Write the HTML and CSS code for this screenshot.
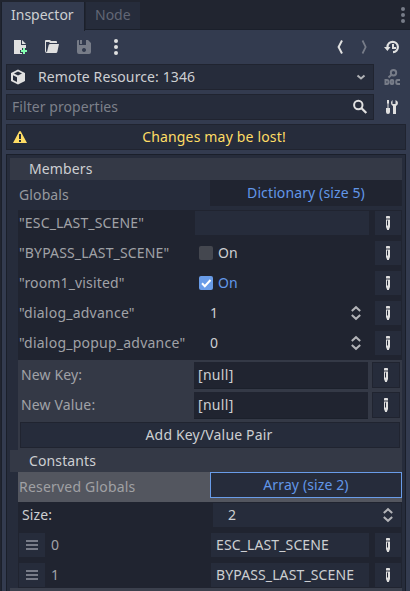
FILE: index.html
```
<!DOCTYPE html>
<html lang="en">
<head>
<meta charset="utf-8">
<title>Inspector</title>
<link rel="stylesheet" href="styles.css">
</head>
<body>
<svg class="defs" width="0" height="0">
  <symbol id="edit" viewBox="0 0 16 16"><path d="M6 1.8Q6 1 6.800 1h2.400q.8 0 .8.8V3.500H6zM6 4.500h4V12l-1.200 3H7.200L6 12zM7 5.500v5h1v-5z" fill-rule="evenodd"/></symbol>
  <symbol id="spin" viewBox="0 0 16 16"><path d="M3.8 6 8 2.2 12.2 6M3.8 10 8 13.8 12.2 10" fill="none" stroke="currentColor" stroke-width="2"/></symbol>
  <symbol id="grip" viewBox="0 0 16 16"><path d="M2 3h12v2H2zm0 4h12v2H2zm0 4h12v2H2z"/></symbol>
  <symbol id="dots" viewBox="0 0 16 16"><circle cx="8" cy="2" r="2"/><circle cx="8" cy="8" r="2"/><circle cx="8" cy="14" r="2"/></symbol>
</svg>
<div class="window">
  <header class="tabs">
    <div class="tab active">Inspector</div>
    <div class="tab">Node</div>
    <svg class="icon dim tabmenu" viewBox="0 0 16 16"><use href="#dots"/></svg>
  </header>
  <main class="dock">
    <div class="toolbar">
      <svg class="icon" viewBox="0 0 16 16"><path d="M2 1h7v5h5v3h-4v2H8v3h2v1H2zM10 1l4 4h-4z"/><path d="M11 9h2v2h2v2h-2v2h-2v-2H9v-2h2z" fill="#84ffb1"/></svg>
      <svg class="icon" viewBox="0 0 16 16"><path d="M2 1Q1 1 1 2v10q0 2 2 2h9q1 0 1.300-1L15 5H6.500Q5 5 4.700 6L3 13q-1 0-1-1V3h3l1 1h7V3q0-1-1-1H7L6 1z"/></svg>
      <svg class="icon dim" viewBox="0 0 16 16"><path d="M2 1h1v5h7V1h2l3 3v9q0 2-2 2H3q-2 0-2-2V2q0-1 1-1zm2 0h2v4H4zm4 8a2 2 0 1 0 .01 0z" fill-rule="evenodd"/></svg>
      <svg class="icon" viewBox="0 0 16 16"><use href="#dots"/></svg>
      <svg class="icon back" viewBox="0 0 16 16"><path d="M10 1.500 6.600 8l3.400 6.500" fill="none" stroke="currentColor" stroke-width="2"/></svg>
      <svg class="icon dim forward" viewBox="0 0 16 16"><path d="M6.500 1.500 9.700 8l-3.200 6.500" fill="none" stroke="currentColor" stroke-width="1.700"/></svg>
      <svg class="icon history" viewBox="0 0 16 16"><path d="M3.500 9V8A5.200 5.200 0 1 1 9 13.200" fill="none" stroke="currentColor" stroke-width="2.200"/><path d="M0 8h6.500L3.400 12zM8 5h2v3h2v2H8z"/></svg>
    </div>
    <div class="line">
      <div class="box">
        <svg class="icon cube" viewBox="0 0 16 16"><path d="m8 .5 7 3.500v8l-7 3.500L1 12V4zm0 2L4 4.600l4 2 4-2zM3 6.300v4.600l4 2V8.300z" fill-rule="evenodd"/></svg>
        <span class="grow resource">Remote Resource: 1346</span>
        <svg class="icon chevron" viewBox="0 0 16 16"><path d="m4.500 6.500 3.500 3 3.500-3" fill="none" stroke="currentColor" stroke-width="2"/></svg>
      </div>
      <svg class="icon dim side" viewBox="0 0 16 16"><g fill="none" stroke="currentColor" stroke-width="2"><circle cx="9.500" cy="3.700" r="2.700"/><path d="M7.500 5.800 4.500 8.500"/><path d="M1.500 11H3q1.500 0 1.500 2T3 15H1.500zM7.500 11h1q.7 0 .7.700v2.600q0 .7-.7.700h-1q-.7 0-.7-.700v-2.600q0-.7.700-.700M16 11h-2.500q-1.200 0-1.200 1v2q0 1 1.200 1H16"/></g></svg>
    </div>
    <div class="line">
      <div class="box">
        <span class="grow filter">Filter properties</span>
        <svg class="icon search" viewBox="0 0 16 16"><circle cx="6.300" cy="6" r="4.200" fill="none" stroke="currentColor" stroke-width="2"/><path d="m9.300 9 5 5" stroke="currentColor" stroke-width="2.300"/></svg>
      </div>
      <svg class="icon side" viewBox="0 0 16 16"><path d="M3 1h2v3l-.5 1v4H6v4q0 2-2 2t-2-2V9h1.500V5L3 4zM8.500 1v4h3V1Q14 2 14 4t-2 3v8H9V7Q7 6 7 4t1.500-3z"/></svg>
    </div>
    <div class="warning">
      <svg class="icon" viewBox="0 0 16 16"><path d="M8 2q.6 0 1 .8L15 14H1L7 2.800Q7.400 2 8 2zM7 5v5h2V5zm0 6v2h2v-2z" fill-rule="evenodd"/></svg>
      <span class="grow">Changes may be lost!</span>
    </div>
    <div class="properties">
      <div class="section">Members</div>
      <div class="prop">
        <span class="label">Globals</span>
        <div class="value link">Dictionary (size 5)</div>
      </div>
      <div class="entries dict">
        <div class="entry"><span class="key">"ESC_LAST_SCENE"</span><span class="field"></span><span class="pen"><svg class="icon"><use href="#edit"/></svg></span></div>
        <div class="entry"><span class="key">"BYPASS_LAST_SCENE"</span><span class="check"><i class="tick"></i>On</span><span class="pen"><svg class="icon"><use href="#edit"/></svg></span></div>
        <div class="entry"><span class="key">"room1_visited"</span><span class="check on"><i class="tick"><svg viewBox="0 0 14 14"><path d="m3 7.300 2.800 2.900L11.500 4" fill="none" stroke="#fff" stroke-width="2"/></svg></i>On</span><span class="pen"><svg class="icon"><use href="#edit"/></svg></span></div>
        <div class="entry"><span class="key wide">"dialog_advance"</span><span class="number">1<svg class="icon"><use href="#spin"/></svg></span><span class="pen"><svg class="icon"><use href="#edit"/></svg></span></div>
        <div class="entry"><span class="key wide">"dialog_popup_advance"</span><span class="number">0<svg class="icon"><use href="#spin"/></svg></span><span class="pen"><svg class="icon"><use href="#edit"/></svg></span></div>
      </div>
      <div class="additions">
        <div class="newrow"><span class="key">New Key:</span><span class="null">[null]</span><span class="pen"><svg class="icon"><use href="#edit"/></svg></span></div>
        <div class="newrow"><span class="key">New Value:</span><span class="null">[null]</span><span class="pen"><svg class="icon"><use href="#edit"/></svg></span></div>
        <div class="add">Add Key/Value Pair</div>
      </div>
      <div class="section">Constants</div>
      <div class="prop selected">
        <span class="label">Reserved Globals</span>
        <div class="value link">Array (size 2)</div>
      </div>
      <div class="entries array">
        <div class="sizerow"><span class="key">Size:</span><span class="size">2<svg class="icon"><use href="#spin"/></svg></span></div>
        <div class="item"><span class="pen grip"><svg class="icon"><use href="#grip"/></svg></span><span class="key">0</span><span class="field">ESC_LAST_SCENE</span><span class="pen"><svg class="icon"><use href="#edit"/></svg></span></div>
        <div class="item"><span class="pen grip"><svg class="icon"><use href="#grip"/></svg></span><span class="key">1</span><span class="field">BYPASS_LAST_SCENE</span><span class="pen"><svg class="icon"><use href="#edit"/></svg></span></div>
      </div>
      <div class="section"></div>
    </div>
  </main>
</div>
</body>
</html>
```
FILE: styles.css
```
* { box-sizing: border-box; }
body { margin: 0; background: #202430; overflow: hidden; font: 14px/20px "Noto Sans", sans-serif; color: #cdcfd2; }
.defs { display: block; }
.window { height: 591px; padding: 2px 0 0 1px; overflow: hidden; background: #212530; }
.icon { width: 16px; height: 16px; flex: none; fill: currentColor; color: #e0e0e0; display: block; }
.icon.dim { color: #777c88; }
.grow { flex: 1; }
.tabs { display: flex; height: 27px; gap: 1px; }
.tab { height: 27px; width: 54px; padding: 3px 0 0 9px; background: #262c3b; color: #626775; }
.tab.active { width: 84px; height: 29px; background: #333b4f; color: #cdcfd2; border: solid #1b202b; border-width: 0 1px; z-index: 1; }
.tabmenu { margin: 5px -1px 0 auto; }
.dock { height: 562px; background: #333b4f; border: solid #1b202b; border-width: 1px 0 0 1px; padding: 0 4px; letter-spacing: .12px; }
.toolbar { display: flex; align-items: center; height: 34px; padding: 0 6px; gap: 16px; }
.toolbar .back { margin-left: auto; }
.toolbar .forward { margin-left: -8px; }
.toolbar .history { margin-left: -4px; }
.line { display: flex; height: 26px; margin-bottom: 4px; align-items: center; }
.box, .warning { display: flex; align-items: center; height: 26px; border: 1px solid #202430; background: #262c3b; }
.box { width: 368px; }
.cube { margin-left: 3px; }
.resource { padding-left: 12px; }
.chevron { margin-right: 4px; opacity: .75; }
.filter { padding-left: 5px; letter-spacing: .06px; color: #7c808a; }
.search { margin-right: 5px; }
.side { margin-left: 10px; }
.warning { width: 400px; color: #ffdd65; text-align: center; padding: 0 5px; margin-bottom: 4px; letter-spacing: .17px; }
.warning .icon { color: #ffdd65; }
.properties { width: 400px; height: 440px; border: 1px solid #1a1f2a; background: #262c3b; padding: 3px; }
.section { height: 22px; padding: 1px 19px; background: #343946; }
.prop { display: flex; height: 30px; margin-left: 8px; }
.label { width: 192px; padding: 5px 1px; color: #96999f; }
.value { width: 192px; height: 26px; padding: 3px 2px; text-align: center; background: #202430; }
.link { color: #6297e8; }
.prop.selected { background: #53565f; }
.selected .label { color: #a0a1a4; letter-spacing: .2px; }
.selected .value { border: 1px solid #699ce8; background: #262c3b; padding: 2px 1px; }
.entries { margin-left: 8px; background: #202430; }
.entry { display: grid; grid-template-columns: 176px 175px 31px; height: 30px; padding: 1px 1px 5px; }
.entry .pen { margin-left: 5px; }
.key { color: #a0a2a7; line-height: 24px; white-space: nowrap; letter-spacing: .15px; }
.key.wide { letter-spacing: .23px; }
.pen { width: 26px; height: 24px; background: #262c3b; display: grid; place-items: center; }
.field { height: 24px; background: #262c3b; padding: 2px 5px; }
.entry .field { margin-right: 1px; }
.check, .number { display: flex; align-items: center; }
.check { padding-left: 4px; gap: 5px; }
.tick { width: 14px; height: 14px; border-radius: 2px; background: #44474f; }
.tick svg { display: block; }
.on { color: #6297e8; }
.on .tick { background: #699ce8; }
.number { padding: 0 6px 0 15px; justify-content: space-between; }
.number .icon, .size .icon { color: #b3b4b8; }
.additions { margin-left: 8px; height: 90px; background: #343946; padding: 2px; }
.newrow { display: grid; grid-template-columns: 174px 174px 28px; height: 26px; margin-bottom: 4px; }
.newrow .key { padding-left: 1px; line-height: 26px; }
.null { background: #202430; padding: 3px 4px; border: solid #1b202b; border-width: 0 0 1px; letter-spacing: .3px; }
.newrow .pen { width: 28px; height: 26px; margin-left: 4px; border: 1px solid #202430; }
.add { height: 26px; padding: 2px; border: 1px solid #202430; background: #262c3b; text-align: center; letter-spacing: .17px; text-indent: -2px; }
.array { height: 86px; padding: 1px; }
.sizerow { display: flex; height: 30px; }
.sizerow .key { width: 194px; padding-left: 3px; color: #cdcfd2; }
.size { width: 188px; height: 24px; padding: 0 5px 0 15px; display: flex; align-items: center; justify-content: space-between; background: #262c3b; }
.item { display: grid; grid-template-columns: 32px 160px 164px 26px; height: 30px; }
.item .field { margin-right: 6px; width: 158px; }
.grip .icon { color: #777b87; }
.properties > .section:last-child { background: #3b404d; }
```
